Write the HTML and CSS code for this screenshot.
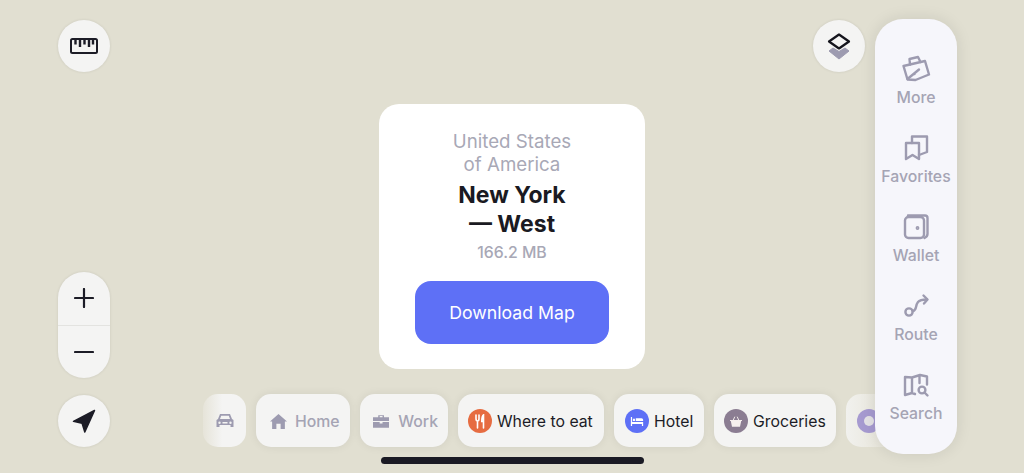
FILE: index.html
```html
<!DOCTYPE html>
<html lang="en">
<head>
<meta charset="utf-8">
<title>Map</title>
<link rel="stylesheet" href="styles.css">
</head>
<body>
<main class="map">
  <div class="left-rail">
    <button class="round" aria-label="Ruler">
      <svg width="30" height="18" viewBox="0 0 30 18" fill="none" stroke="#1c1c26" stroke-width="2"><rect x="2" y="2" width="26" height="14" rx="1.500"/><path d="M6.500 2.500v5M11 2.500v7.500M15.500 2.500v5M20 2.500v7.500M24 2.500v5" stroke-width="2.400"/></svg>
    </button>
    <div class="rail-bottom">
      <div class="zoom">
        <button class="zoom-btn" aria-label="Zoom in"><svg width="20" height="20" viewBox="0 0 20 20" stroke="#1c1c26" stroke-width="2.200" stroke-linecap="round"><path d="M10 1v18M1 10h18"/></svg></button>
        <button class="zoom-btn zoom-minus" aria-label="Zoom out"><svg width="20" height="20" viewBox="0 0 20 20" stroke="#1c1c26" stroke-width="2.200" stroke-linecap="round"><path d="M1 10h18"/></svg></button>
      </div>
      <button class="round" aria-label="My location">
        <svg width="24" height="24" viewBox="0 0 24 24" fill="#1c1c26"><path d="M22.500 1.500 1.500 12.300l8.600 2 2.700 8.700z" stroke="#1c1c26" stroke-width="1.500" stroke-linejoin="round"/></svg>
      </button>
    </div>
  </div>

  <section class="card">
    <p class="country">United States<br>of America</p>
    <h1 class="region">New York<br>— West</h1>
    <p class="size">166.2 MB</p>
    <button class="download">Download Map</button>
  </section>

  <div class="right-rail">
    <button class="round" aria-label="Layers">
      <svg width="24" height="30" viewBox="0 0 24 30" fill="none"><path d="M2 20 12 28l10-8-4-3-6 3.500L6 17z" fill="#9d9bb0" stroke="#9d9bb0" stroke-linejoin="round"/><path d="M12 3.500 22 10.500l-10 7-10-7z" fill="#f4f4f3" stroke="#14141c" stroke-width="2.200" stroke-linejoin="round"/></svg>
    </button>
    <nav class="panel">
      <a class="panel-item">
        <svg width="30" height="30" viewBox="0 0 30 30" fill="none" stroke="#9d9bb0" stroke-width="2.400" stroke-linejoin="round" stroke-linecap="round"><path d="M2.500 11 24 6l4 13.500L14.500 25l-8-.5z"/><path d="M9 9.500 8.500 4 17 2l2.500 5M6.500 24 18 14.500M13 19h.5"/></svg>
        <span>More</span>
      </a>
      <a class="panel-item">
        <svg width="30" height="30" viewBox="0 0 30 30" fill="none" stroke="#9d9bb0" stroke-width="2.400" stroke-linejoin="round" stroke-linecap="round"><path d="M5 9h13v16l-6.500-4L5 25z"/><path d="M11 9V2.500h15v15.500l-8 3"/></svg>
        <span>Favorites</span>
      </a>
      <a class="panel-item">
        <svg width="30" height="30" viewBox="0 0 30 30" fill="none" stroke="#9d9bb0" stroke-width="2.400" stroke-linejoin="round" stroke-linecap="round"><rect x="4" y="4" width="19" height="21" rx="3.500"/><path d="M7 2.500h17a2.500 2.500 0 0 1 2.500 2.500v16c0 2-1 3-3 4"/><circle cx="16.500" cy="15" r=".7" fill="#9d9bb0"/></svg>
        <span>Wallet</span>
      </a>
      <a class="panel-item">
        <svg width="30" height="30" viewBox="0 0 30 30" fill="none" stroke="#9d9bb0" stroke-width="2.400" stroke-linejoin="round" stroke-linecap="round"><circle cx="8" cy="20" r="3.600"/><path d="M12 19c4-1 2-5 5-9 2-2.500 5-2.500 9-2.500"/><path d="M22.500 3.500 26.500 7.500 23 11.500"/></svg>
        <span>Route</span>
      </a>
      <a class="panel-item">
        <svg width="30" height="30" viewBox="0 0 30 30" fill="none" stroke="#9d9bb0" stroke-width="2.400" stroke-linejoin="round" stroke-linecap="round"><path d="M11 22 4 24V6l7 .5L19 4l7 1.500v8M11 6.500V22M18.500 4.500v7.500M11 22l3 1"/><circle cx="21" cy="19" r="3.400"/><path d="m23.500 21.500 3 3"/></svg>
        <span>Search</span>
      </a>
    </nav>
  </div>

  <div class="chips">
    <div class="chip chip-car fade-left">
      <svg width="20" height="16" viewBox="0 0 18 16" fill="#9d9bb0"><path d="M4 1h10l2 5 1.500 1v7h-3v-2H3.500v2h-3V7L2 6zm1.200 1.800L4 6h10l-1.200-3.200zM3.500 8.500a1.200 1.200 0 1 0 0 2.400 1.200 1.200 0 0 0 0-2.400zm11 0a1.200 1.200 0 1 0 0 2.400 1.200 1.200 0 0 0 0-2.400zM6.500 9v1.500h5V9z" fill-rule="evenodd"/></svg>
    </div>
    <div class="chip chip-muted">
      <svg width="17" height="15" viewBox="0 0 16 14" fill="#9d9bb0"><path d="M8 0 16 7h-2v7h-4V9H6v5H2V7H0z"/></svg>
      <span>Home</span>
    </div>
    <div class="chip chip-muted">
      <svg width="17" height="14" viewBox="0 0 17 14" fill="#9d9bb0"><path fill-rule="evenodd" d="M5.500 3V1h6v2h5.500v4H0V3zM7 1.800v1.200h3V1.800zM0 8h7v1.500h3V8h7v6H0z"/></svg>
      <span>Work</span>
    </div>
    <div class="chip">
      <span class="dot dot-orange">
        <svg width="10" height="15" viewBox="0 0 10 15" fill="none" stroke="#fff" stroke-width="1.600" stroke-linecap="round"><path d="M2.500 7v7M1 1v3.500C1 6 1.500 7 2.500 7S4 6 4 4.500V1M8.500 14V1C7.200 2 6.800 4.500 6.800 7.500h1.700"/></svg>
      </span>
      <span>Where to eat</span>
    </div>
    <div class="chip">
      <span class="dot dot-blue">
        <svg width="14" height="9" viewBox="0 0 15 11" fill="#fff"><path d="M0 0h1.500v6H15v5h-1.500V8.500h-12V11H0z"/><path d="M6 1.500h7a2 2 0 0 1 2 2v1.500H6zM2.500 2h2.500v3H2.500z"/></svg>
      </span>
      <span>Hotel</span>
    </div>
    <div class="chip">
      <span class="dot dot-mauve">
        <svg width="12" height="11" viewBox="0 0 15 13" fill="#f6f0ee"><path d="M0 4.500h15v1.500h-1L12.500 13h-10L1 6H0z"/><path d="m4 5 2-4.500M11 5 9 .5" fill="none" stroke="#f6f0ee" stroke-width="1.200"/></svg>
      </span>
      <span>Groceries</span>
    </div>
    <div class="chip chip-last fade-right">
      <span class="dot dot-fuel"><span class="dot-core"></span></span>
    </div>
  </div>

  <div class="home-bar"></div>
</main>
</body>
</html>
```
FILE: styles.css
```css
* { box-sizing: border-box; }
html, body { margin: 0; height: 100%; overflow: hidden; }
body { font-family: Inter, "Liberation Sans", sans-serif; background: #e1dfd1; }
button { font: inherit; border: 0; padding: 0; cursor: pointer; }
p, h1 { margin: 0; }

.map {
  position: relative;
  width: 1024px;
  height: 473px;
  background: #e1dfd1;
  overflow: hidden;
  display: flex;
  justify-content: center;
}

.round {
  width: 52px;
  height: 52px;
  border-radius: 50%;
  background: #f4f4f3;
  box-shadow: 0 0 3px rgba(0, 0, 0, .1);
  display: flex;
  align-items: center;
  justify-content: center;
  flex: none;
}

.left-rail {
  position: absolute;
  left: 58px;
  top: 20px;
  bottom: 26px;
  display: flex;
  flex-direction: column;
  justify-content: space-between;
}
.rail-bottom { display: flex; flex-direction: column; gap: 17px; }
.zoom {
  width: 52px;
  height: 106px;
  border-radius: 26px;
  background: #f4f4f3;
  box-shadow: 0 0 3px rgba(0, 0, 0, .1);
  display: flex;
  flex-direction: column;
  overflow: hidden;
}
.zoom-btn {
  flex: 1;
  background: transparent;
  display: flex;
  align-items: center;
  justify-content: center;
}
.zoom-minus { border-top: 1px solid #e3e3e0; }

.card {
  margin-top: 104px;
  width: 266px;
  height: 265px;
  background: #fff;
  border-radius: 20px;
  display: flex;
  flex-direction: column;
  align-items: center;
  text-align: center;
  padding-top: 26px;
}
.country { font-size: 18.700px; line-height: 23px; color: #a8a8b6; }
.region { font-size: 23px; line-height: 29px; font-weight: 700; color: #1a1a22; margin-top: 5px; }
.size { font-size: 15.800px; line-height: 18px; color: #a8a8b6; font-weight: 500; margin-top: 5px; }
.download {
  margin-top: 19px;
  width: 194px;
  height: 63px;
  border-radius: 16px;
  background: #5e70f6;
  color: #fff;
  font-size: 17.700px;
}

.right-rail {
  position: absolute;
  left: 813px;
  top: 19px;
  display: flex;
  align-items: flex-start;
  gap: 10px;
  z-index: 2;
}
.right-rail > .round { margin-top: 1px; }
.panel {
  width: 82px;
  height: 435px;
  border-radius: 28px;
  background: #f6f6fb;
  box-shadow: 0 0 16px rgba(0, 0, 0, .1);
  display: flex;
  flex-direction: column;
  align-items: center;
  padding-top: 36px;
  gap: 27px;
}
.panel-item {
  height: 52px;
  display: flex;
  flex-direction: column;
  align-items: center;
  justify-content: flex-end;
  gap: 4px;
  color: #a5a4b4;
  font-size: 15.800px;
  line-height: 18px;
  font-weight: 500;
}
.panel-item svg { flex: none; }

.chips {
  position: absolute;
  left: 203px;
  top: 394px;
  display: flex;
  gap: 10px;
}
.chip {
  height: 53px;
  padding: 1px 10px 0;
  border-radius: 15px;
  background: #f4f4f3;
  box-shadow: 0 0 10px rgba(0, 0, 0, .07);
  display: flex;
  align-items: center;
  gap: 5px;
  font-size: 15.800px;
  font-weight: 400;
  color: #1c1c26;
  white-space: nowrap;
}
.chip:nth-child(2) { width: 94px; padding-left: 14px; gap: 8px; }
.chip:nth-child(3) { width: 88px; padding-left: 13px; gap: 9px; }
.chip:nth-child(4) { width: 146px; }
.chip:nth-child(5) { width: 90px; padding-left: 11px; gap: 5px; }
.chip:nth-child(6) { width: 122px; padding-left: 10px; gap: 5px; }
.chip-muted { color: #a5a4b4; font-weight: 500; }
.chip-car { width: 43px; justify-content: center; padding: 1px 0 0; }
.chip-last { width: 60px; padding-left: 11px; }
.fade-left { background: linear-gradient(90deg, #e6e4d9, #f4f4f3 45%); box-shadow: none; }
.fade-right { background: linear-gradient(90deg, #f1f1ee, #e8e6db 60%); box-shadow: none; }

.dot {
  width: 24px;
  height: 24px;
  border-radius: 50%;
  display: flex;
  align-items: center;
  justify-content: center;
  flex: none;
}
.dot-orange { background: #e66c41; }
.dot-blue { background: #5e70f6; }
.dot-mauve { background: #8b7d92; }
.dot-fuel { background: #a69ad0; }
.dot-core { width: 10px; height: 10px; border-radius: 50%; background: #e4e2e6; }

.home-bar {
  position: absolute;
  left: 381px;
  top: 457px;
  width: 263px;
  height: 7px;
  border-radius: 4px;
  background: #1a1a24;
}
```
